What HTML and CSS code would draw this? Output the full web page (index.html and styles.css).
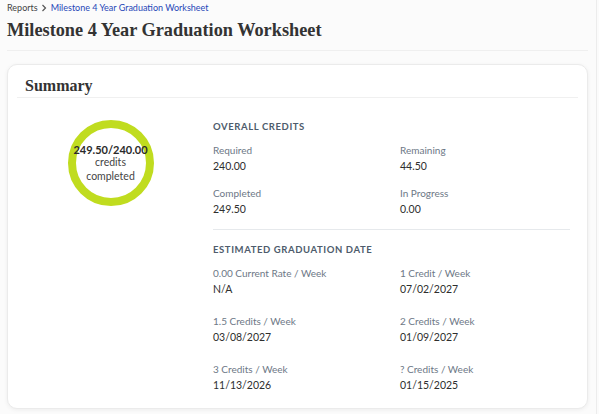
FILE: index.html
```html
<!DOCTYPE html>
<html lang="en">
<head>
	<meta charset="UTF-8">
	<title>Milestone 4 Year Graduation Worksheet</title>
	<link rel="stylesheet" href="styles.css">
</head>
<body>
	<div class="page">
		<div class="page-head">
			<nav class="crumbs">
				<span class="crumb">Reports</span>
				<svg class="crumb-sep" width="6" height="8" viewBox="0 0 6 8"><path d="M1.5 1l3 3-3 3" fill="none" stroke="#555" stroke-width="1.2"/></svg>
				<a class="crumb-link" href="#">Milestone 4 Year Graduation Worksheet</a>
			</nav>
			<h1 class="page-title">Milestone 4 Year Graduation Worksheet</h1>
		</div>

		<section class="card">
			<div class="card-head">
				<h2 class="card-title">Summary</h2>
			</div>
			<div class="card-body">
				<div class="ring-wrap">
					<div class="ring">
						<strong class="ring-total">249.50/240.00</strong>
						<span>credits</span>
						<span>completed</span>
					</div>
				</div>
				<div class="details">
					<h3 class="group-title">Overall Credits</h3>
					<div class="stats">
						<div class="stat"><div class="stat-label">Required</div><div class="stat-value">240.00</div></div>
						<div class="stat"><div class="stat-label">Remaining</div><div class="stat-value">44.50</div></div>
						<div class="stat"><div class="stat-label">Completed</div><div class="stat-value">249.50</div></div>
						<div class="stat"><div class="stat-label">In Progress</div><div class="stat-value">0.00</div></div>
					</div>
					<hr class="divider">
					<h3 class="group-title">Estimated Graduation Date</h3>
					<div class="stats stats-wide">
						<div class="stat"><div class="stat-label">0.00 Current Rate / Week</div><div class="stat-value">N/A</div></div>
						<div class="stat"><div class="stat-label">1 Credit / Week</div><div class="stat-value">07/02/2027</div></div>
						<div class="stat"><div class="stat-label">1.5 Credits / Week</div><div class="stat-value">03/08/2027</div></div>
						<div class="stat"><div class="stat-label">2 Credits / Week</div><div class="stat-value">01/09/2027</div></div>
						<div class="stat"><div class="stat-label">3 Credits / Week</div><div class="stat-value">11/13/2026</div></div>
						<div class="stat"><div class="stat-label">? Credits / Week</div><div class="stat-value">01/15/2025</div></div>
					</div>
				</div>
			</div>
		</section>
	</div>
</body>
</html>
```

FILE: styles.css
```css
body{
	margin:0;
	background:#fbfbfb;
	font-family:Lato, "Noto Sans", sans-serif;
	color:#2e2e2e;
}
.page{
	width:581px;
	height:414px;
	padding:0 8px 0 7px;
	border-right:1px solid #ececec;
	overflow:hidden;
}
.page-head{
	padding-top:2px;
	padding-bottom:8px;
	border-bottom:1px solid #efefef;
}
.crumbs{
	display:flex;
	align-items:center;
	gap:3px;
	font-size:9px;
	line-height:12px;
}
.crumb{
	color:#444;
}
.crumb-link{
	color:#2747b8;
	text-decoration:none;
	margin-left:1px;
}
.page-title{
	margin:4px 0 0;
	font-family:"Liberation Serif", serif;
	font-weight:bold;
	font-size:18.3px;
	line-height:24px;
	color:#333;
}
.card{
	margin-top:13px;
	height:343px;
	background:#fff;
	border:1px solid #ebebeb;
	border-radius:10px;
	box-shadow:0 1px 4px rgba(0,0,0,0.06);
}
.card-head{
	margin:0 9px;
	padding:11px 8px 1px;
	border-bottom:1px solid #f0f0f0;
}
.card-title{
	margin:0;
	font-family:"Liberation Serif", serif;
	font-weight:bold;
	font-size:16px;
	line-height:20px;
	color:#333;
}
.card-body{
	display:flex;
	padding-top:23px;
}
.ring-wrap{
	width:205px;
	display:flex;
	justify-content:center;
}
.ring{
	width:70px;
	height:70px;
	margin:-1px 0 0 0;
	border:8px solid #c0dc1f;
	border-radius:50%;
	display:flex;
	flex-direction:column;
	align-items:center;
	justify-content:center;
	font-size:10.5px;
	line-height:13.5px;
	color:#444;
	white-space:nowrap;
}
.ring-total{
	font-size:11px;
	color:#2a2a2a;
}
.details{
	width:357px;
}
.group-title{
	margin:0;
	font-size:9.5px;
	line-height:12px;
	font-weight:bold;
	text-transform:uppercase;
	letter-spacing:0.6px;
	color:#4e5c6c;
}
.stats{
	display:grid;
	grid-template-columns:187px 1fr;
	row-gap:12px;
	margin-top:10px;
}
.stats-wide{
	row-gap:17px;
}
.stat-label{
	font-size:10px;
	line-height:15px;
	color:#6d7886;
}
.stat-value{
	font-size:10.5px;
	line-height:16px;
	color:#2e2e2e;
}
.divider{
	margin:12px 0 14px;
	border:0;
	border-top:1px solid #e6e9ec;
}
```
